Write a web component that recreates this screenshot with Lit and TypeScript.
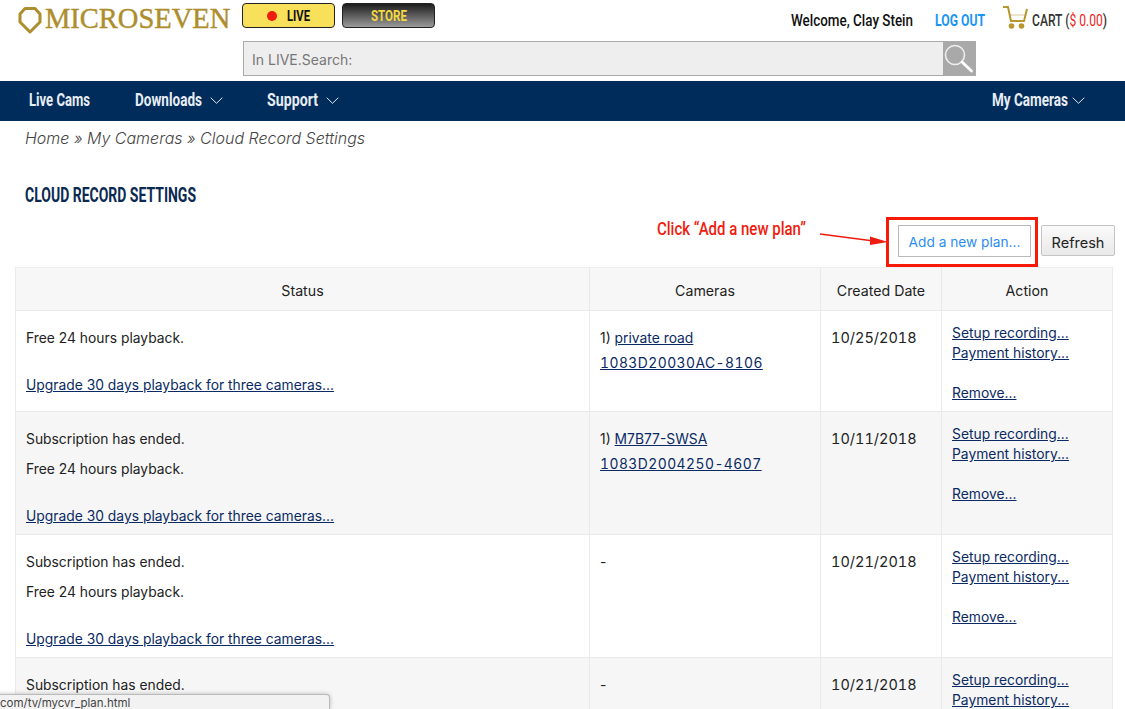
import { LitElement, html, css, svg } from "lit";
import { customElement, property } from "lit/decorators.js";

/* Condensed display type: no condensed family is installed, so the text is squeezed to a set width. */
@customElement("c-t")
export class CondText extends LitElement {
  @property({ type: Number }) w = 50;
  static styles = css`
    :host { display: inline-block; white-space: nowrap; vertical-align: top; }
    .in { display: inline-block; transform-origin: 0 50%; font-family: "Roboto", "Liberation Sans", sans-serif; }
  `;
  updated() {
    const el = this.renderRoot.querySelector(".in") as HTMLElement;
    el.style.transform = "none";
    const natural = el.getBoundingClientRect().width;
    this.style.width = this.w + "px";
    el.style.transform = `scaleX(${this.w / natural})`;
  }
  render() {
    return html`<span class="in"><slot></slot></span>`;
  }
}

const chev = html`<svg class="chev" width="13" height="7" viewBox="0 0 13 7"><path d="M.7.7l5.8 5.6L12.3.7" fill="none" stroke="#dfe5ee" stroke-width="1"/></svg>`;

interface Row { status: string[]; cam?: [string, string]; date: string; alt?: boolean; h: number; }
const rows: Row[] = [
  { status: ["Free 24 hours playback."], cam: ["private road", "1083D20030AC-8106"], date: "10/25/2018", h: 101 },
  { status: ["Subscription has ended.", "Free 24 hours playback."], cam: ["M7B77-SWSA", "1083D2004250-4607"], date: "10/11/2018", alt: true, h: 123 },
  { status: ["Subscription has ended.", "Free 24 hours playback."], date: "10/21/2018", h: 123 },
  { status: ["Subscription has ended.", "Free 24 hours playback."], date: "10/21/2018", alt: true, h: 123 },
];

@customElement("app-root")
export class AppRoot extends LitElement {
  static styles = css`
    :host { display: block; position: relative; width: 1125px; height: 709px; overflow: hidden; background: #fff; font-family: "Inter", "Liberation Sans", sans-serif; color: #222; }
    a { color: #0b2a63; text-decoration: underline; }
    .top { height: 81px; display: grid; grid-template-columns: 243px 733px 1fr; grid-template-rows: 41px 40px; }
    .logo { display: flex; align-items: center; gap: 3px; padding: 3px 0 0 18px; color: #ad8d2c; font: 28.5px/1 "Liberation Serif", serif; -webkit-text-stroke: .4px #ad8d2c; height: 36px; box-sizing: border-box; white-space: nowrap; }
    .logo-cell { grid-row: 1 / 3; }
    .head { grid-column: 2 / 4; grid-row: 1; display: flex; align-items: flex-start; }
    .pills { display: flex; gap: 7px; padding-top: 3px; align-items: flex-start; margin-left: -1px; }
    .pill { width: 93px; height: 25px; box-sizing: border-box; border: 1px solid #222; border-radius: 4px; display: flex; align-items: center; justify-content: center; gap: 10px; font-weight: 700; font-size: 15px; line-height: 18px; padding-top: 1px; }
    .pill.live { background: #f9e05a; color: #111; }
    .pill.store { background: linear-gradient(#1d1d1d, #9a9a9a); color: #f4d83f; }
    .dot { width: 10px; height: 10px; border-radius: 50%; background: #f01c0c; }
    .user { margin-left: auto; display: flex; align-items: flex-start; padding: 10px 18px 0 0; white-space: nowrap; font-size: 16.5px; line-height: 20px; }
    .wel { color: #111; font-weight: 500; }
    .out { color: #1b95f3; font-weight: 700; margin-left: 22px; }
    .cart { color: #333; font-weight: 500; }
    .cartic { margin: -7px 4px 0 17px; flex: none; }
    .red { color: #ee1c1c; font-weight: 400; }
    .search { grid-column: 2; grid-row: 2; height: 35px; box-sizing: border-box; border: 1px solid #aaa; background: #eee; display: flex; align-items: center; justify-content: space-between; color: #777; font-size: 14px; padding-left: 8px; }
    .search span { padding-top: 2px; }
    .sbtn { width: 32px; height: 33px; background: #a9a9a9; display: flex; align-items: center; justify-content: center; }
    nav { height: 40px; background: #002c5c; display: flex; align-items: center; color: #e8edf4; font-size: 19px; line-height: 22px; font-weight: 700; padding: 0 40px 2px 29px; box-sizing: border-box; }
    nav .i { display: flex; align-items: center; gap: 8px; }
    nav .a { margin-right: 45px; }
    nav .b { margin-right: 44px; }
    nav .r { margin-left: auto; gap: 4px; }
    .crumb { padding: 7px 0 0 25px; font-size: 16px; line-height: 20px; font-style: italic; font-weight: 300; color: #444; height: 47px; box-sizing: border-box; white-space: nowrap; }
    h1 { margin: 0; padding-left: 25px; height: 49px; font-size: 20px; line-height: 22px; padding-top: 16px; box-sizing: border-box; color: #0b2a52; font-weight: 700; }
    .tools { height: 50px; box-sizing: border-box; position: relative; display: flex; justify-content: flex-end; align-items: flex-start; padding: 8px 10px 0 0; gap: 10px; font-size: 13.7px; }
    .add { width: 133px; height: 32px; box-sizing: border-box; border: 1px solid #b9b9b9; color: #2a8df0; display: flex; align-items: center; justify-content: center; background: #fff; padding-top: 2px; }
    .ref { width: 74px; height: 31px; box-sizing: border-box; border: 1px solid #c4c4c4; background: linear-gradient(#fafafa, #e9e9e9); display: flex; align-items: center; justify-content: center; color: #222; border-radius: 2px; padding-top: 3px; font-size: 14.5px; }
    .box { position: absolute; left: 886px; top: 0; width: 152px; height: 50px; box-sizing: border-box; border: 3px solid #f81a08; }
    .note { position: absolute; left: 657px; top: 2px; color: #f01c10; font-size: 18px; line-height: 20px; font-weight: 500; }
    .arrow { position: absolute; left: 818px; top: 12px; }
    .tbl { margin-left: 15px; width: 1098px; display: grid; grid-template-columns: 575px 231px 121px 171px; border-top: 1px solid #eee; font-size: 13.85px; color: #222; }
    .c { border-right: 1px solid #e9e9e9; border-bottom: 1px solid #e9e9e9; box-sizing: border-box; padding: 0 10px; }
    .first { border-left: 1px solid #e9e9e9; }
    .h { height: 43px; background: #f7f7f7; display: flex; align-items: center; justify-content: center; padding-top: 2px; font-size: 14.2px; }
    .alt { background: #f6f6f6; }
    .st { display: flex; flex-direction: column; padding-top: 17px; line-height: 20px; gap: 10px; }
    .st .up { margin-top: 17px; }
    .cam { padding-top: 15px; line-height: 25px; }
    .sn { font-variant-numeric: tabular-nums; letter-spacing: .47px; }
    .dt { padding-top: 17px; line-height: 20px; font-size: 14.5px; font-variant-numeric: tabular-nums; }
    .act { padding-top: 12px; line-height: 20px; display: flex; flex-direction: column; }
    .act a { width: max-content; }
    .act a:last-child { margin-top: 20px; }
    .tip { position: absolute; left: -6px; bottom: 0; width: 336px; height: 15px; box-sizing: border-box; background: #f2f2f2; border: 1px solid #bbb; border-bottom: 0; border-radius: 0 4px 0 0; box-shadow: 0 0 4px rgba(0,0,0,.25); font-size: 11.5px; line-height: 16px; color: #444; padding-left: 5px; white-space: nowrap; }
  `;

  private logo() {
    return svg`<svg width="24" height="28" viewBox="0 0 24 28"><path d="M7 2.5h10L22 8v8L12 26 2 16V8z" fill="none" stroke="#ad8d2c" stroke-width="3" stroke-linejoin="round"/></svg>`;
  }

  render() {
    return html`
      <div class="top">
        <div class="logo-cell"><div class="logo">${this.logo()}<span>MICROSEVEN</span></div></div>
        <div class="head">
          <div class="pills">
            <div class="pill live"><span class="dot"></span><c-t w="23">LIVE</c-t></div>
            <div class="pill store"><c-t w="36">STORE</c-t></div>
          </div>
          <div class="user">
            <c-t class="wel" w="122">Welcome, Clay Stein</c-t>
            <c-t class="out" w="50">LOG OUT</c-t>
            <svg class="cartic" width="26" height="26" viewBox="0 0 26 26"><path d="M1 4h5l3 14h13l3-12" fill="none" stroke="#b8962e" stroke-width="2"/><path d="M8 12h15" stroke="#b8962e" stroke-width="1" opacity=".5"/><circle cx="9.5" cy="23" r="2.8" fill="#b8962e"/><circle cx="19.5" cy="23" r="2.8" fill="#b8962e"/></svg>
            <c-t class="cart" w="75">CART (<span class="red">$ 0.00</span>)</c-t>
          </div>
        </div>
        <div class="search">
          <span>In LIVE.Search:</span>
          <div class="sbtn"><svg width="30" height="30" viewBox="0 0 30 30"><circle cx="11" cy="11" r="9.5" fill="none" stroke="#eee" stroke-width="1.6"/><path d="M18 18l9.5 9" stroke="#fff" stroke-width="2.8" stroke-linecap="round"/></svg></div>
        </div>
      </div>
      <nav>
        <span class="i a"><c-t w="61">Live Cams</c-t></span>
        <span class="i b"><c-t w="67">Downloads</c-t> ${chev}</span>
        <span class="i"><c-t w="51">Support</c-t> ${chev}</span>
        <span class="i r"><c-t w="76">My Cameras</c-t> ${chev}</span>
      </nav>
      <div class="crumb">Home » My Cameras » Cloud Record Settings</div>
      <h1><c-t w="171">CLOUD RECORD SETTINGS</c-t></h1>
      <div class="tools">
        <div class="note"><c-t w="149">Click “Add a new plan”</c-t></div>
        <svg class="arrow" width="72" height="20" viewBox="0 0 72 20"><path d="M2 5l50 6.5" stroke="#f01c10" stroke-width="1.6"/><path d="M52 7.5l18 5.5-18 3z" fill="#f01c10"/></svg>
        <div class="add">Add a new plan...</div>
        <div class="ref">Refresh</div>
        <div class="box"></div>
      </div>
      <div class="tbl">
        <div class="c h first">Status</div><div class="c h">Cameras</div><div class="c h">Created Date</div><div class="c h">Action</div>
        ${rows.map((r) => {
          const alt = r.alt ? "alt" : "";
          return html`
            <div class="c first st ${alt}" style="height:${r.h}px">
              ${r.status.map((s) => html`<div>${s}</div>`)}
              <div class="up"><a href="#">Upgrade 30 days playback for three cameras...</a></div>
            </div>
            <div class="c cam ${alt}">
              ${r.cam ? html`1) <a href="#">${r.cam[0]}</a><br /><a class="sn" href="#">${r.cam[1]}</a>` : html`-`}
            </div>
            <div class="c dt ${alt}">${r.date}</div>
            <div class="c act ${alt}">
              <a href="#">Setup recording...</a>
              <a href="#">Payment history...</a>
              <a href="#">Remove...</a>
            </div>`;
        })}
      </div>
      <div class="tip">com/tv/mycvr_plan.html</div>
    `;
  }
}
